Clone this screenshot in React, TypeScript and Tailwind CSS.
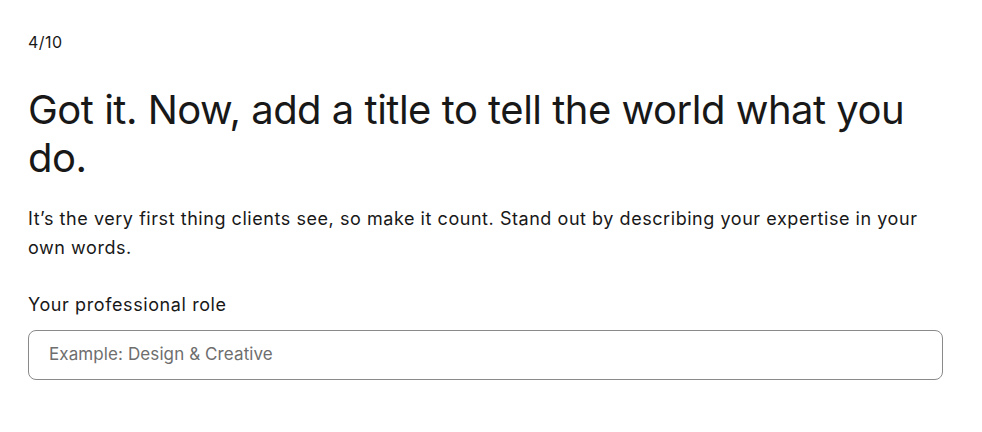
export default function App() {
  return (
    <div className="min-h-screen bg-white text-[#181818]" style={{ fontFamily: 'Inter, "Liberation Sans", Arial, sans-serif' }}>
      <div className="pl-[28px] pr-[39px] pt-[32px]">
        <div className="text-[16px] leading-[20px] tracking-[0.5px]">4/10</div>
        <h1 className="mt-[34px] text-[40px] leading-[48px] tracking-[-0.5px] font-normal">
          Got it. Now, add a title to tell the world what you do.
        </h1>
        <p className="mt-[22px] text-[18px] leading-[29px] tracking-[0.55px]">
          It’s the very first thing clients see, so make it count. Stand out by describing your expertise in your own words.
        </p>
        <label className="mt-[31px] block text-[18px] leading-[24px] tracking-[0.6px]">Your professional role</label>
        <div className="mt-[13px] h-[50px] rounded-[8px] border border-[#8a8a8a] flex items-center px-[20px]">
          <input
            className="w-full outline-none text-[17px] tracking-[0.1px] placeholder:text-[#6e6e6e]"
            placeholder="Example: Design & Creative"
            style={{ fontFamily: 'Inter, "Liberation Sans", Arial, sans-serif' }}
          />
        </div>
      </div>
    </div>
  );
}
